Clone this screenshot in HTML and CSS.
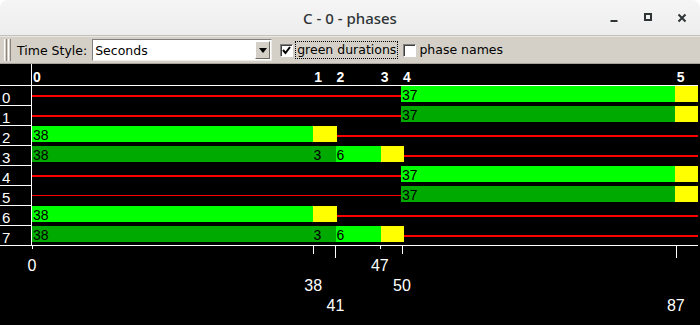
FILE: index.html
```html
<!DOCTYPE html>
<html lang="en">

<head>
    <meta charset="UTF-8">
    <title>C - 0 - phases</title>
    <link rel="stylesheet" href="styles.css">
</head>

<body>
    <div class="window">
        <header class="titlebar">
            <span></span>
            <h1 class="title">C - 0 - phases</h1>
            <div class="win-controls">
                <span class="win-btn">
                    <svg width="10" height="10" viewBox="0 0 10 10"><rect x="1.5" y="7" width="7" height="2" fill="#2e3436"/></svg>
                </span>
                <span class="win-btn">
                    <svg width="10" height="10" viewBox="0 0 10 10"><rect x="2" y="1" width="6" height="6" fill="none" stroke="#2e3436" stroke-width="2"/></svg>
                </span>
                <span class="win-btn">
                    <svg width="10" height="10" viewBox="0 0 10 10"><path d="M1.5 1.5 L8.5 8.5 M8.5 1.5 L1.5 8.5" stroke="#2e3436" stroke-width="2"/></svg>
                </span>
            </div>
        </header>

        <div class="toolbar">
            <span class="grip"><i></i><i></i></span>
            <label class="field-label">Time Style:</label>
            <div class="combo">
                <span class="combo-value">Seconds</span>
                <span class="combo-btn"><i class="arrow"></i></span>
            </div>
            <label class="check">
                <span class="box">
                    <svg width="11" height="11" viewBox="0 0 11 11"><path d="M2 5 L4.5 8 L9 2" fill="none" stroke="#000" stroke-width="2"/></svg>
                </span>
                <span class="check-text focused">green durations</span>
            </label>
            <label class="check">
                <span class="box"></span>
                <span class="check-text">phase names</span>
            </label>
        </div>

        <div class="chart">
            <div class="chart-head">
                <div class="gutter"></div>
                <div class="axis">
                    <span class="phase-no" style="--t:0">0</span>
                    <span class="phase-no" style="--t:38">1</span>
                    <span class="phase-no" style="--t:41">2</span>
                    <span class="phase-no" style="--t:47">3</span>
                    <span class="phase-no" style="--t:50">4</span>
                    <span class="phase-no" style="--t:87">5</span>
                </div>
            </div>

            <div class="chart-body">
                <div class="row">
                    <div class="row-no">0</div>
                    <div class="lane">
                        <div class="seg red" style="--d:50"></div>
                        <div class="seg go" style="--d:37">37</div>
                        <div class="seg amber" style="--d:3"></div>
                    </div>
                </div>
                <div class="row">
                    <div class="row-no">1</div>
                    <div class="lane">
                        <div class="seg red" style="--d:50"></div>
                        <div class="seg go held" style="--d:37">37</div>
                        <div class="seg amber" style="--d:3"></div>
                    </div>
                </div>
                <div class="row">
                    <div class="row-no">2</div>
                    <div class="lane">
                        <div class="seg go" style="--d:38">38</div>
                        <div class="seg amber" style="--d:3"></div>
                        <div class="seg red" style="--d:49"></div>
                    </div>
                </div>
                <div class="row">
                    <div class="row-no">3</div>
                    <div class="lane">
                        <div class="seg go held" style="--d:38">38</div>
                        <div class="seg go held" style="--d:3">3</div>
                        <div class="seg go" style="--d:6">6</div>
                        <div class="seg amber" style="--d:3"></div>
                        <div class="seg red" style="--d:40"></div>
                    </div>
                </div>
                <div class="row">
                    <div class="row-no">4</div>
                    <div class="lane">
                        <div class="seg red" style="--d:50"></div>
                        <div class="seg go" style="--d:37">37</div>
                        <div class="seg amber" style="--d:3"></div>
                    </div>
                </div>
                <div class="row">
                    <div class="row-no">5</div>
                    <div class="lane">
                        <div class="seg red thin" style="--d:50"></div>
                        <div class="seg go held" style="--d:37">37</div>
                        <div class="seg amber" style="--d:3"></div>
                    </div>
                </div>
                <div class="row">
                    <div class="row-no">6</div>
                    <div class="lane">
                        <div class="seg go" style="--d:38">38</div>
                        <div class="seg amber" style="--d:3"></div>
                        <div class="seg red" style="--d:49"></div>
                    </div>
                </div>
                <div class="row">
                    <div class="row-no">7</div>
                    <div class="lane">
                        <div class="seg go held" style="--d:38">38</div>
                        <div class="seg go held" style="--d:3">3</div>
                        <div class="seg go" style="--d:6">6</div>
                        <div class="seg amber" style="--d:3"></div>
                        <div class="seg red" style="--d:40"></div>
                    </div>
                </div>
            </div>

            <div class="chart-foot">
                <div class="foot-gutter"></div>
                <div class="axis">
                    <i class="tick lv0" style="--t:0"></i>
                    <i class="tick lv1" style="--t:38"></i>
                    <i class="tick lv2" style="--t:41"></i>
                    <i class="tick lv0" style="--t:47"></i>
                    <i class="tick lv1" style="--t:50"></i>
                    <i class="tick lv2" style="--t:87"></i>

                    <span class="time lv0" style="--t:0">0</span>
                    <span class="time lv1" style="--t:38">38</span>
                    <span class="time lv2" style="--t:41">41</span>
                    <span class="time lv0" style="--t:47">47</span>
                    <span class="time lv1" style="--t:50">50</span>
                    <span class="time lv2" style="--t:87">87</span>
                </div>
            </div>
        </div>
    </div>
</body>

</html>
```

FILE: styles.css
```css
body {
    margin: 0;
    background-color: #fff;
    font-family: "DejaVu Sans", sans-serif;
    overflow: hidden;
}

.window {
    width: 700px;
    height: 325px;
    display: flex;
    flex-direction: column;
}

/* Title bar */
.titlebar {
    height: 35px;
    display: grid;
    grid-template-columns: 1fr auto 1fr;
    align-items: center;
    background: linear-gradient(#f5f5f5, #ededed);
    border-bottom: 1px solid #c4c1bb;
    border-radius: 8px 8px 0 0;
}

.title {
    margin: 0;
    padding-top: 1px;
    font-family: "Noto Sans", sans-serif;
    font-size: 15px;
    font-weight: 500;
    color: #2e3436;
}

.win-controls {
    justify-self: end;
    display: flex;
    padding-right: 1px;
}

.win-btn {
    width: 34px;
    height: 35px;
    display: flex;
    align-items: center;
    justify-content: center;
}

.win-btn svg {
    margin-top: 1px;
}

/* Toolbar */
.toolbar {
    height: 28px;
    box-sizing: border-box;
    display: flex;
    align-items: center;
    background-color: #d4d0c8;
    border-top: 1px solid #e9e7e3;
    border-bottom: 1px solid #a8a49c;
    font-size: 12.5px;
    color: #000;
}

.grip {
    display: flex;
    gap: 1px;
    margin-left: 4px;
}

.grip i {
    width: 1px;
    height: 22px;
    border-left: 1px solid #fff;
    border-right: 1px solid #8a867f;
}

.field-label {
    margin-left: 6px;
}

.combo {
    margin-left: 5px;
    width: 180px;
    height: 22px;
    box-sizing: border-box;
    display: flex;
    align-items: center;
    background-color: #fff;
    border: 1px solid;
    border-color: #808080 #eeece8 #eeece8 #808080;
}

.combo-value {
    flex: 1;
    padding-left: 2px;
}

.combo-btn {
    width: 15px;
    height: 18px;
    margin-right: 1px;
    box-sizing: border-box;
    display: flex;
    align-items: center;
    justify-content: center;
    background-color: #d4d0c8;
    border: 1px solid;
    border-color: #fff #6f6b64 #6f6b64 #fff;
}

.arrow {
    width: 0;
    height: 0;
    border-left: 4px solid transparent;
    border-right: 4px solid transparent;
    border-top: 5px solid #000;
}

.check {
    display: flex;
    align-items: center;
    margin-left: 8px;
}

.check + .check {
    margin-left: 5px;
}

.box {
    width: 13px;
    height: 13px;
    box-sizing: border-box;
    display: flex;
    align-items: center;
    justify-content: center;
    background-color: #fff;
    border: 1px solid;
    border-color: #808080 #fff #fff #808080;
    box-shadow: inset 1px 1px 0 #404040;
}

.check-text {
    margin-left: 3px;
    line-height: 16px;
}

.check-text.focused {
    margin-left: 2px;
    padding: 0 1px;
    border: 1px dotted #000;
}

/* Phase chart */
.chart {
    flex: 1;
    display: flex;
    flex-direction: column;
    background-color: #000;
    color: #fff;
    font-family: "Liberation Sans", Arial, sans-serif;
}

.chart-head {
    display: flex;
    height: 21px;
}

.gutter {
    width: 32px;
    box-sizing: border-box;
    border-right: 1px solid #fff;
}

.axis {
    position: relative;
    width: 666px;
}

.phase-no {
    position: absolute;
    top: 6px;
    left: calc(var(--t) * 100% / 90 + 1px);
    font-size: 14px;
    line-height: 14px;
    font-weight: bold;
}

.chart-body {
    width: 698px;
    border-top: 1px solid #fff;
    border-bottom: 1px solid #fff;
}

.row {
    display: flex;
    height: 20px;
}

.row:last-child {
    height: 19px;
}

.row-no {
    width: 32px;
    box-sizing: border-box;
    padding: 3px 0 0 2px;
    border-right: 1px solid #fff;
    border-bottom: 1px solid #fff;
    font-size: 15px;
    line-height: 17px;
}

.row:last-child .row-no {
    border-bottom: none;
}

.lane {
    display: flex;
    align-items: flex-start;
    width: 666px;
    height: 19px;
}

.seg {
    flex: var(--d) 1 0px;
    min-width: 0;
    height: 16px;
    box-sizing: border-box;
    padding: 1px 0 0 1px;
    font-size: 14px;
    line-height: 16px;
    color: #000;
    white-space: nowrap;
}

.seg.go {
    background-color: #00ff00;
}

.seg.held {
    background-color: #00aa00;
}

.seg.amber {
    background-color: #ffff00;
}

.seg.red {
    height: 2px;
    margin-top: 9px;
    padding: 0;
    background-color: #ff0000;
}

.seg.red.thin {
    height: 1px;
}

.chart-foot {
    flex: 1;
    display: flex;
}

.foot-gutter {
    width: 32px;
}

.tick {
    position: absolute;
    top: 0;
    left: calc(var(--t) * 100% / 90);
    width: 1px;
    background-color: #fff;
}

.tick.lv0 { height: 3px; }
.tick.lv1 { height: 8px; }
.tick.lv2 { height: 12px; }

.time {
    position: absolute;
    left: calc(var(--t) * 100% / 90);
    transform: translateX(-50%);
    font-size: 16px;
    line-height: 16px;
}

.time.lv0 { top: 12px; }
.time.lv1 { top: 32px; }
.time.lv2 { top: 52px; }
```
